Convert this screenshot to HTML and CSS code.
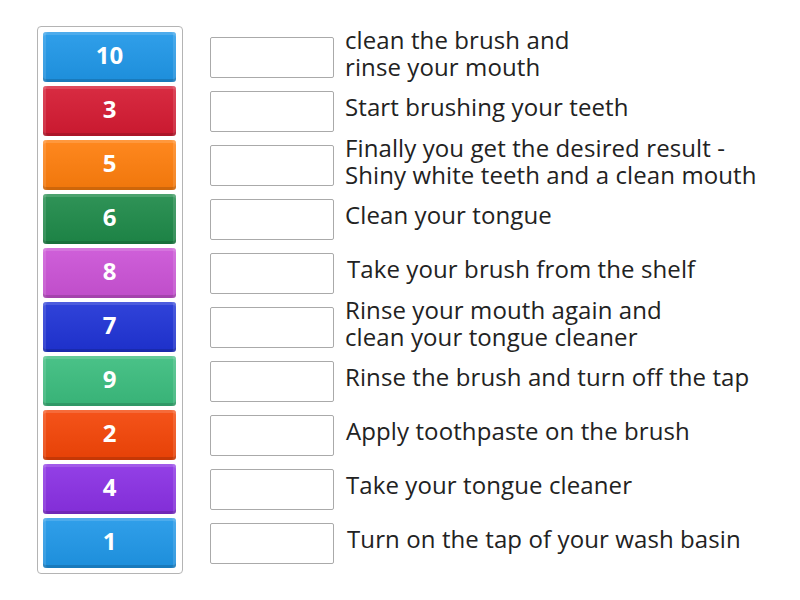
FILE: index.html
```html
<!DOCTYPE html>
<html>
<head>
<meta charset="utf-8">
<link rel="stylesheet" href="styles.css">
</head>
<body>
<div class="page">
  <div class="tiles">
    <div class="tile c-blue">10</div>
    <div class="tile c-red">3</div>
    <div class="tile c-orange">5</div>
    <div class="tile c-green">6</div>
    <div class="tile c-pink">8</div>
    <div class="tile c-navy">7</div>
    <div class="tile c-mint">9</div>
    <div class="tile c-flame">2</div>
    <div class="tile c-purple">4</div>
    <div class="tile c-blue">1</div>
  </div>
  <div class="rows">
    <div class="row"><div class="slot"></div><div class="label">clean the brush and<br>rinse your mouth</div></div>
    <div class="row"><div class="slot"></div><div class="label">Start brushing your teeth</div></div>
    <div class="row"><div class="slot"></div><div class="label">Finally you get the desired result -<br>Shiny white teeth and a clean mouth</div></div>
    <div class="row"><div class="slot"></div><div class="label">Clean your tongue</div></div>
    <div class="row"><div class="slot"></div><div class="label ind2">Take your brush from the shelf</div></div>
    <div class="row"><div class="slot"></div><div class="label">Rinse your mouth again and<br>clean your tongue cleaner</div></div>
    <div class="row"><div class="slot"></div><div class="label">Rinse the brush and turn off the tap</div></div>
    <div class="row"><div class="slot"></div><div class="label ind1">Apply toothpaste on the brush</div></div>
    <div class="row"><div class="slot"></div><div class="label ind1">Take your tongue cleaner</div></div>
    <div class="row"><div class="slot"></div><div class="label ind2">Turn on the tap of your wash basin</div></div>
  </div>
</div>
</body>
</html>
```

FILE: styles.css
```css
html, body {
  margin: 0;
  padding: 0;
  background: #ffffff;
}
body {
  font-family: "Open Sans", "Liberation Sans", sans-serif;
  color: #222222;
}
.page {
  display: flex;
  align-items: flex-start;
  padding: 26px 0 0 37px;
}
.tiles {
  display: flex;
  flex-direction: column;
  gap: 4px;
  padding: 5px 6px 5px 5px;
  border: 1px solid #b4b4b4;
  border-radius: 4px;
}
.tile {
  width: 133px;
  height: 50px;
  box-sizing: border-box;
  border-radius: 3px;
  display: flex;
  align-items: center;
  justify-content: center;
  color: #ffffff;
  font-weight: 700;
  font-size: 24px;
  padding-bottom: 5px;
  box-shadow:
    inset 0 -3px 0 rgba(0,0,0,0.14),
    inset 0 3px 0 rgba(255,255,255,0.14),
    inset 3px 0 0 rgba(255,255,255,0.12),
    inset -3px 0 0 rgba(255,255,255,0.12);
  background-image: linear-gradient(rgba(255,255,255,0.08), rgba(0,0,0,0.06));
}
.c-blue { background-color: #1f97e8; }
.c-red { background-color: #d51a32; }
.c-orange { background-color: #ff7e0c; }
.c-green { background-color: #1e8a49; }
.c-pink { background-color: #cb52d6; }
.c-navy { background-color: #1f33d6; }
.c-mint { background-color: #3bbd7e; }
.c-flame { background-color: #f44507; }
.c-purple { background-color: #8a30e4; }
.rows {
  display: flex;
  flex-direction: column;
  gap: 4px;
  padding-top: 6px;
  margin-left: 27px;
}
.row {
  height: 50px;
  display: flex;
  align-items: center;
}
.slot {
  width: 124px;
  height: 41px;
  box-sizing: border-box;
  border: 1px solid #aaaaaa;
  border-radius: 2px;
  background: #ffffff;
  flex: none;
}
.label {
  margin-left: 11px;
  margin-top: -9px;
  font-size: 24px;
  letter-spacing: 0.1px;
  line-height: 27px;
  white-space: nowrap;
}
.ind1 { margin-left: 12px; }
.ind2 { margin-left: 13px; }
```
